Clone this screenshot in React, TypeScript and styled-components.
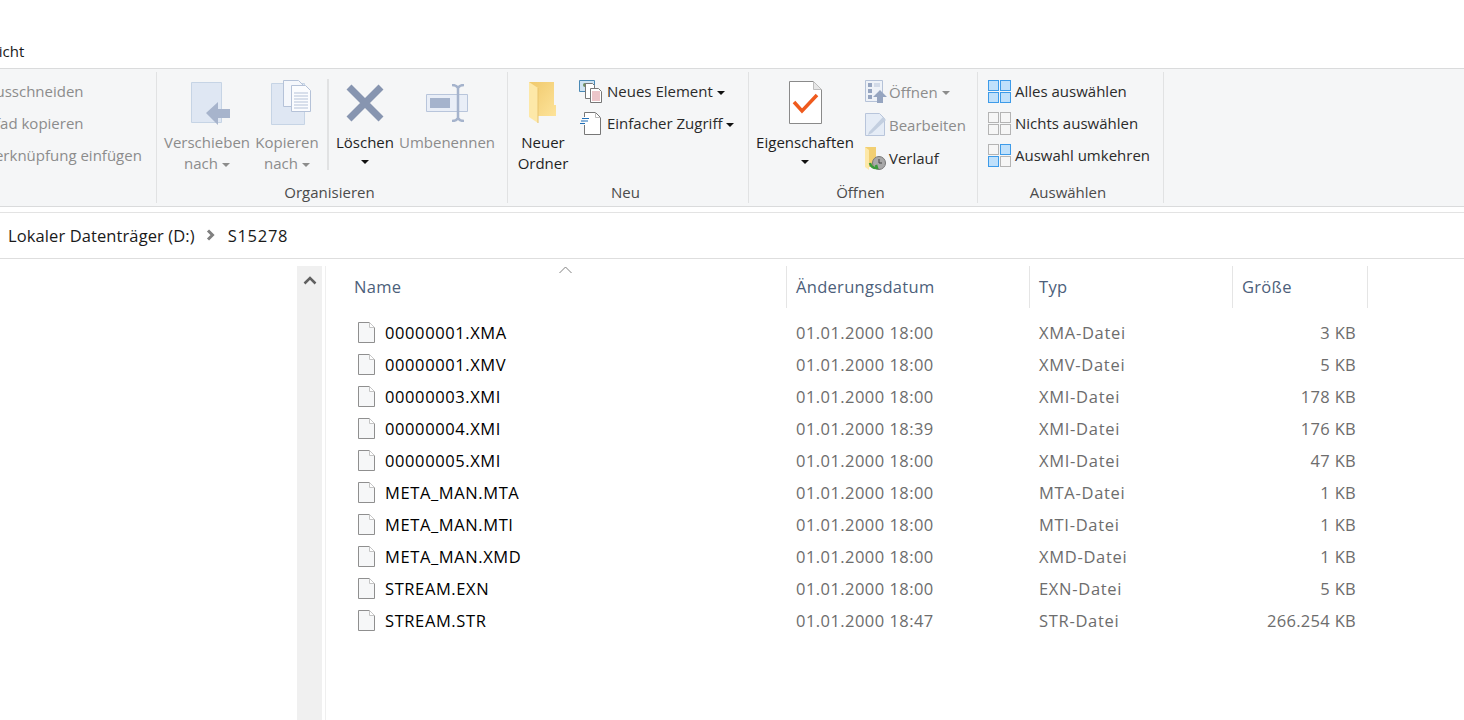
import React from 'react';
import styled, { createGlobalStyle } from 'styled-components';

const GlobalStyle = createGlobalStyle`
    html, body {
        margin: 0;
        padding: 0;
        background: #fff;
    }
    body {
        font-family: 'Open Sans', 'Noto Sans', 'Liberation Sans', sans-serif;
        font-size: 15px;
        color: #1a1a1a;
    }
`;

const Window = styled.div`
    width: 1464px;
    height: 720px;
    overflow: hidden;
    display: flex;
    flex-direction: column;
    background: #fff;
`;

const TabStrip = styled.div`
    height: 68px;
    flex: none;
    display: flex;
    align-items: flex-end;
    box-sizing: border-box;
    padding-bottom: 6px;
`;

const Tab = styled.span`
    margin-left: -27px;
    line-height: 22px;
`;

const Ribbon = styled.div`
    height: 139px;
    flex: none;
    box-sizing: border-box;
    display: flex;
    background: #f5f6f7;
    border-top: 1px solid #dadbdc;
    border-bottom: 1px solid #dadbdc;
    padding-top: 3px;
`;

const Group = styled.div<{ $width: number }>`
    width: ${(p) => p.$width}px;
    height: 131px;
    flex: none;
    box-sizing: border-box;
    display: flex;
    flex-direction: column;
    border-right: 1px solid #e1e2e3;
`;

const GroupBody = styled.div`
    height: 109px;
    display: flex;
`;

const GroupLabel = styled.div`
    text-align: center;
    color: #4b4b4b;
    line-height: 22px;
    padding-right: 5px;
`;

const ClippedList = styled.div`
    margin-left: -14px;
    padding-top: 3px;
`;

const BigButton = styled.div<{ $width: number; $disabled?: boolean }>`
    width: ${(p) => p.$width}px;
    flex: none;
    display: flex;
    flex-direction: column;
    align-items: center;
    color: ${(p) => (p.$disabled ? '#8c8c8c' : '#1f1f1f')};
    text-align: center;
    line-height: 21px;
    white-space: nowrap;
`;

const BigIcon = styled.div`
    height: 60px;
    display: flex;
    align-items: center;
    padding-top: 1px;
    box-sizing: border-box;
`;

const Caret = styled.span<{ $disabled?: boolean }>`
    display: inline-block;
    width: 0;
    height: 0;
    margin-left: 4px;
    vertical-align: middle;
    border-left: 4px solid transparent;
    border-right: 4px solid transparent;
    border-top: 4px solid ${(p) => (p.$disabled ? '#8c8c8c' : '#111')};
`;

const StackedCaret = styled(Caret)`
    margin: 7px 0 0 0;
`;

const ToolDivider = styled.div`
    width: 2px;
    height: 91px;
    margin: 7px 5px 0 10px;
    flex: none;
    background: #e1e2e3;
`;

const SmallButton = styled.div<{ $disabled?: boolean }>`
    display: flex;
    align-items: center;
    white-space: nowrap;
    color: ${(p) => (p.$disabled ? '#8c8c8c' : '#2b2b2b')};
`;

const SmallColumn = styled.div<{ $left: number; $gap: number; $row: number }>`
    padding-left: ${(p) => p.$left}px;
    padding-top: 3px;
    display: flex;
    flex-direction: column;

    ${SmallButton} {
        gap: ${(p) => p.$gap}px;
        height: ${(p) => p.$row}px;
    }
`;

const SmallIcon = styled.span`
    width: 23px;
    height: 24px;
    flex: none;
    display: flex;
    align-items: center;
    justify-content: center;
`;

const PlainRow = styled.div`
    height: 32px;
    line-height: 32px;
    color: #8c8c8c;
    white-space: nowrap;
`;

const AddressBar = styled.div`
    height: 47px;
    flex: none;
    margin-top: 5px;
    box-sizing: border-box;
    border-top: 1px solid #e3e3e3;
    border-bottom: 1px solid #dedede;
    display: flex;
    align-items: center;
    padding: 0 0 1px 8px;
    font-size: 16.5px;
    letter-spacing: 0.1px;
    color: #1a1a1a;
`;

const CrumbArrow = styled.span`
    margin: 0 13px 0 11px;
    display: flex;
    align-items: center;
`;

const CrumbFolder = styled.span`
    letter-spacing: 0.7px;
`;

const Content = styled.div`
    flex: 1;
    display: flex;
    padding-top: 7px;
    min-height: 0;
`;

const NavPane = styled.div`
    width: 297px;
    flex: none;
`;

const ScrollTrack = styled.div`
    width: 25px;
    flex: none;
    background: #f0f0f0;
    display: flex;
    justify-content: center;
    padding-top: 10px;
    box-sizing: border-box;
`;

const PaneSplitter = styled.div`
    width: 4px;
    flex: none;
    box-sizing: border-box;
    border-right: 1px solid #efefef;
`;

const FileList = styled.div`
    flex: 1;
    position: relative;
`;

const SortMark = styled.svg`
    position: absolute;
    left: 233px;
    top: 0;
`;

const HeaderRow = styled.div`
    display: grid;
    grid-template-columns: 461px 243px 203px 135px;
    height: 40px;
    margin-bottom: 10px;
`;

const HeaderCell = styled.div`
    box-sizing: border-box;
    border-right: 1px solid #e5e5e5;
    padding: 0 0 0 9px;
    line-height: 42px;
    color: #4c607a;
    font-size: 16.5px;
    letter-spacing: 0.3px;

    &:first-child {
        padding-left: 28px;
    }
`;

const FileRow = styled.div`
    display: grid;
    grid-template-columns: 461px 243px 203px 135px;
    height: 32px;
    align-items: center;
`;

const NameCell = styled.div`
    display: flex;
    align-items: center;
    gap: 10px;
    padding-left: 32px;
    color: #000;
    font-size: 16.5px;
    letter-spacing: 0.6px;
`;

const InfoCell = styled.div<{ $right?: boolean; $tracking: number }>`
    color: #6d6d6d;
    font-size: 16.5px;
    letter-spacing: ${(p) => p.$tracking}px;
    padding-left: 9px;
    padding-right: ${(p) => (p.$right ? '12px' : '0')};
    text-align: ${(p) => (p.$right ? 'right' : 'left')};
`;

const files = [
    { name: '00000001.XMA', date: '01.01.2000 18:00', type: 'XMA-Datei', size: '3 KB' },
    { name: '00000001.XMV', date: '01.01.2000 18:00', type: 'XMV-Datei', size: '5 KB' },
    { name: '00000003.XMI', date: '01.01.2000 18:00', type: 'XMI-Datei', size: '178 KB' },
    { name: '00000004.XMI', date: '01.01.2000 18:39', type: 'XMI-Datei', size: '176 KB' },
    { name: '00000005.XMI', date: '01.01.2000 18:00', type: 'XMI-Datei', size: '47 KB' },
    { name: 'META_MAN.MTA', date: '01.01.2000 18:00', type: 'MTA-Datei', size: '1 KB' },
    { name: 'META_MAN.MTI', date: '01.01.2000 18:00', type: 'MTI-Datei', size: '1 KB' },
    { name: 'META_MAN.XMD', date: '01.01.2000 18:00', type: 'XMD-Datei', size: '1 KB' },
    { name: 'STREAM.EXN', date: '01.01.2000 18:00', type: 'EXN-Datei', size: '5 KB' },
    { name: 'STREAM.STR', date: '01.01.2000 18:47', type: 'STR-Datei', size: '266.254 KB' },
];

const FileIcon = () => (
    <svg width="17" height="21" viewBox="0 0 17 21">
        <path d="M.5.5h11l5 5v15H.5z" fill="#f6f7f8" stroke="#8f8f8f" />
        <path d="M11.5.5v5h5" fill="#fff" stroke="#c4c4c4" />
    </svg>
);

const MoveIcon = () => (
    <svg width="46" height="44" viewBox="-7 -1 46 44">
        <path d="M.5.500h30v40H.5z" fill="#dfe7f3" stroke="#c6d4e5" />
        <path d="M15 31l12-11v7h12v9H27v7z" fill="#a7b4cc" />
    </svg>
);

const CopyIcon = () => (
    <svg width="48" height="46" viewBox="-8 0 48 46">
        <path d="M.5 3.500h33v41H.5z" fill="#dfe7f3" stroke="#c6d4e5" />
        <path d="M12.500.5h15l5 5v21h-20z" fill="#f5f7fb" stroke="#b5c2d8" />
        <path d="M20.500 5.500h14l5 5v21h-19z" fill="#fbfcfe" stroke="#b5c2d8" />
        <path d="M23 13h14M23 16h14M23 19h14M23 22h14M23 25h14M23 28h14" stroke="#b5c2d8" />
    </svg>
);

const DeleteIcon = () => (
    <svg width="38" height="38" viewBox="0 0 38 38">
        <path d="M3 3l32 32M35 3L3 35" stroke="#8795b0" strokeWidth="7" />
    </svg>
);

const RenameIcon = () => (
    <svg width="42" height="38" viewBox="0 0 42 38">
        <path d="M.5 10.500h41v17H.5z" fill="#e9eef7" stroke="#b8c5db" />
        <path d="M4 14h20v10H4z" fill="#a5b3cc" />
        <path
            d="M26 1c4 0 5 1 6 3 1-2 2-3 6-3M26 37c4 0 5-1 6-3 1 2 2 3 6 3M32 4v30"
            fill="none"
            stroke="#a5b3cc"
            strokeWidth="2.500"
        />
    </svg>
);

const FolderIcon = () => (
    <svg width="28" height="41" viewBox="0 0 28 41">
        <defs>
            <linearGradient id="folderBack" x1="0" y1="0" x2="1" y2="1">
                <stop offset="0" stopColor="#f0c96c" />
                <stop offset="1" stopColor="#fde39a" />
            </linearGradient>
        </defs>
        <path d="M0 0h25v23h2v11H9L0 32z" fill="url(#folderBack)" />
        <path d="M0 0l9 6v35l-9-6z" fill="#fde8a8" />
        <path d="M9 6v35" stroke="#e8c46f" />
    </svg>
);

const NewItemIcon = () => (
    <svg width="23" height="23" viewBox="0 0 23 23">
        <path d="M.5.500h15v11H.5z" fill="#cfe3f2" stroke="#4a89b5" />
        <circle cx="6" cy="5" r="2" fill="#6f8f5f" />
        <path d="M6.500 3.500h7l2 2v13h-9z" fill="#fff" stroke="#777" />
        <path d="M11.500 8.500h8l3 3v11h-11z" fill="#fff" stroke="#777" />
        <path d="M13 12h8M13 14h8M13 16h8M13 18h8M13 20h8" stroke="#d98c94" />
    </svg>
);

const EasyAccessIcon = () => (
    <svg width="21" height="23" viewBox="0 0 21 23">
        <path d="M4.500 5V.5h11l5 5v17h-16V13" fill="#fff" stroke="#777" />
        <path d="M15.500.5v5h5" fill="none" stroke="#bbb" />
        <path d="M2 6.500h7M1 9h7M0 11.500h5" stroke="#1f6fb8" />
    </svg>
);

const PropertiesIcon = () => (
    <svg width="33" height="43" viewBox="0 0 33 43">
        <path d="M.5.500h24l8 8v34H.5z" fill="#fff" stroke="#8a8a8a" />
        <path d="M24.500.500v8h8z" fill="#e6e6e6" stroke="#bdbdbd" />
        <path d="M5 21l8 9L28 14" fill="none" stroke="#ef5a1d" strokeWidth="3.500" />
    </svg>
);

const OpenIcon = () => (
    <svg width="22" height="23" viewBox="0 0 22 23">
        <path d="M.5.500h17v21H.5z" fill="#eef2f8" stroke="#b5c2d8" />
        <path d="M3 3h4v4H3zM3 9h4v4H3zM3 15h4v4H3z" fill="#96a5c0" />
        <path d="M9 4h6M9 6h6" stroke="#b5c2d8" />
        <path d="M15 10l7 7h-4v6h-6v-6H8z" fill="#96a5c0" />
    </svg>
);

const EditIcon = () => (
    <svg width="22" height="23" viewBox="0 0 22 23">
        <path d="M.5.500h14l5 5v17H.5z" fill="#e5ecf6" stroke="#b8c5db" />
        <path d="M4 19L18 4l3 3L7 20l-4 2z" fill="#c3cfe0" />
    </svg>
);

const HistoryIcon = () => (
    <svg width="21" height="24" viewBox="0 0 21 24">
        <path d="M0 1h11v20H0z" fill="#f2cf72" />
        <path d="M0 1l4 3v20l-4-3z" fill="#fde8a8" />
        <circle cx="14" cy="17" r="6.500" fill="#a8a8a8" stroke="#777" />
        <path d="M14 13v4h3" stroke="#444" fill="none" />
        <path d="M5 17a6 6 0 0 0 7 5l-1-3" fill="none" stroke="#3a9a3a" strokeWidth="2.500" />
    </svg>
);

const GridIcon = ({ fills }: { fills: boolean[] }) => (
    <svg width="23" height="23" viewBox="0 0 23 23">
        {[
            [0, 0],
            [12, 0],
            [0, 12],
            [12, 12],
        ].map(([x, y], i) => (
            <rect
                key={i}
                x={x + 0.5}
                y={y + 0.5}
                width="10"
                height="10"
                fill={fills[i] ? '#bfe0fb' : '#f6f6f6'}
                stroke={fills[i] ? '#3d9be9' : '#b4b4b4'}
            />
        ))}
    </svg>
);

const App = () => {
    return (
        <Window>
            <GlobalStyle />
            <TabStrip>
                <Tab>Ansicht</Tab>
            </TabStrip>
            <Ribbon>
                <Group $width={157}>
                    <GroupBody>
                        <ClippedList>
                            <PlainRow>Ausschneiden</PlainRow>
                            <PlainRow>Pfad kopieren</PlainRow>
                            <PlainRow>Verknüpfung einfügen</PlainRow>
                        </ClippedList>
                    </GroupBody>
                </Group>
                <Group $width={351}>
                    <GroupBody>
                        <BigButton $width={100} $disabled>
                            <BigIcon>
                                <MoveIcon />
                            </BigIcon>
                            Verschieben
                            <span>
                                nach
                                <Caret $disabled />
                            </span>
                        </BigButton>
                        <BigButton $width={60} $disabled>
                            <BigIcon>
                                <CopyIcon />
                            </BigIcon>
                            Kopieren
                            <span>
                                nach
                                <Caret $disabled />
                            </span>
                        </BigButton>
                        <ToolDivider />
                        <BigButton $width={62}>
                            <BigIcon>
                                <DeleteIcon />
                            </BigIcon>
                            Löschen
                            <StackedCaret />
                        </BigButton>
                        <BigButton $width={102} $disabled>
                            <BigIcon>
                                <RenameIcon />
                            </BigIcon>
                            Umbenennen
                        </BigButton>
                    </GroupBody>
                    <GroupLabel>Organisieren</GroupLabel>
                </Group>
                <Group $width={241}>
                    <GroupBody>
                        <BigButton $width={70}>
                            <BigIcon>
                                <FolderIcon />
                            </BigIcon>
                            Neuer
                            <br />
                            Ordner
                        </BigButton>
                        <SmallColumn $left={1} $gap={5} $row={32}>
                            <SmallButton>
                                <SmallIcon>
                                    <NewItemIcon />
                                </SmallIcon>
                                <span>
                                    Neues Element
                                    <Caret />
                                </span>
                            </SmallButton>
                            <SmallButton>
                                <SmallIcon>
                                    <EasyAccessIcon />
                                </SmallIcon>
                                <span>
                                    Einfacher Zugriff
                                    <Caret />
                                </span>
                            </SmallButton>
                        </SmallColumn>
                    </GroupBody>
                    <GroupLabel>Neu</GroupLabel>
                </Group>
                <Group $width={229}>
                    <GroupBody>
                        <BigButton $width={112}>
                            <BigIcon>
                                <PropertiesIcon />
                            </BigIcon>
                            Eigenschaften
                            <StackedCaret />
                        </BigButton>
                        <SmallColumn $left={3} $gap={2} $row={33}>
                            <SmallButton $disabled>
                                <SmallIcon>
                                    <OpenIcon />
                                </SmallIcon>
                                <span>
                                    Öffnen
                                    <Caret $disabled />
                                </span>
                            </SmallButton>
                            <SmallButton $disabled>
                                <SmallIcon>
                                    <EditIcon />
                                </SmallIcon>
                                Bearbeiten
                            </SmallButton>
                            <SmallButton>
                                <SmallIcon>
                                    <HistoryIcon />
                                </SmallIcon>
                                Verlauf
                            </SmallButton>
                        </SmallColumn>
                    </GroupBody>
                    <GroupLabel>Öffnen</GroupLabel>
                </Group>
                <Group $width={186}>
                    <GroupBody>
                        <SmallColumn $left={10} $gap={4} $row={32}>
                            <SmallButton>
                                <SmallIcon>
                                    <GridIcon fills={[true, true, true, true]} />
                                </SmallIcon>
                                Alles auswählen
                            </SmallButton>
                            <SmallButton>
                                <SmallIcon>
                                    <GridIcon fills={[false, false, false, false]} />
                                </SmallIcon>
                                Nichts auswählen
                            </SmallButton>
                            <SmallButton>
                                <SmallIcon>
                                    <GridIcon fills={[false, true, true, false]} />
                                </SmallIcon>
                                Auswahl umkehren
                            </SmallButton>
                        </SmallColumn>
                    </GroupBody>
                    <GroupLabel>Auswählen</GroupLabel>
                </Group>
            </Ribbon>
            <AddressBar>
                Lokaler Datenträger (D:)
                <CrumbArrow>
                    <svg width="9" height="12" viewBox="0 0 9 12">
                        <path d="M2 1.500L6.500 6 2 10.500" fill="none" stroke="#808080" strokeWidth="3" />
                    </svg>
                </CrumbArrow>
                <CrumbFolder>S15278</CrumbFolder>
            </AddressBar>
            <Content>
                <NavPane />
                <ScrollTrack>
                    <svg width="14" height="9" viewBox="0 0 14 9">
                        <path d="M1.500 7.500L7 2l5.500 5.500" fill="none" stroke="#606060" strokeWidth="2.500" />
                    </svg>
                </ScrollTrack>
                <PaneSplitter />
                <FileList>
                    <SortMark width="13" height="8" viewBox="0 0 13 8">
                        <path d="M.5 7L6.500 1l6 6" fill="none" stroke="#808080" />
                    </SortMark>
                    <HeaderRow>
                        <HeaderCell>Name</HeaderCell>
                        <HeaderCell>Änderungsdatum</HeaderCell>
                        <HeaderCell>Typ</HeaderCell>
                        <HeaderCell>Größe</HeaderCell>
                    </HeaderRow>
                    {files.map((file) => (
                        <FileRow key={file.name}>
                            <NameCell>
                                <FileIcon />
                                {file.name}
                            </NameCell>
                            <InfoCell $tracking={0.45}>{file.date}</InfoCell>
                            <InfoCell $tracking={0.7}>{file.type}</InfoCell>
                            <InfoCell $right $tracking={0.3}>
                                {file.size}
                            </InfoCell>
                        </FileRow>
                    ))}
                </FileList>
            </Content>
        </Window>
    );
};

export default App;
